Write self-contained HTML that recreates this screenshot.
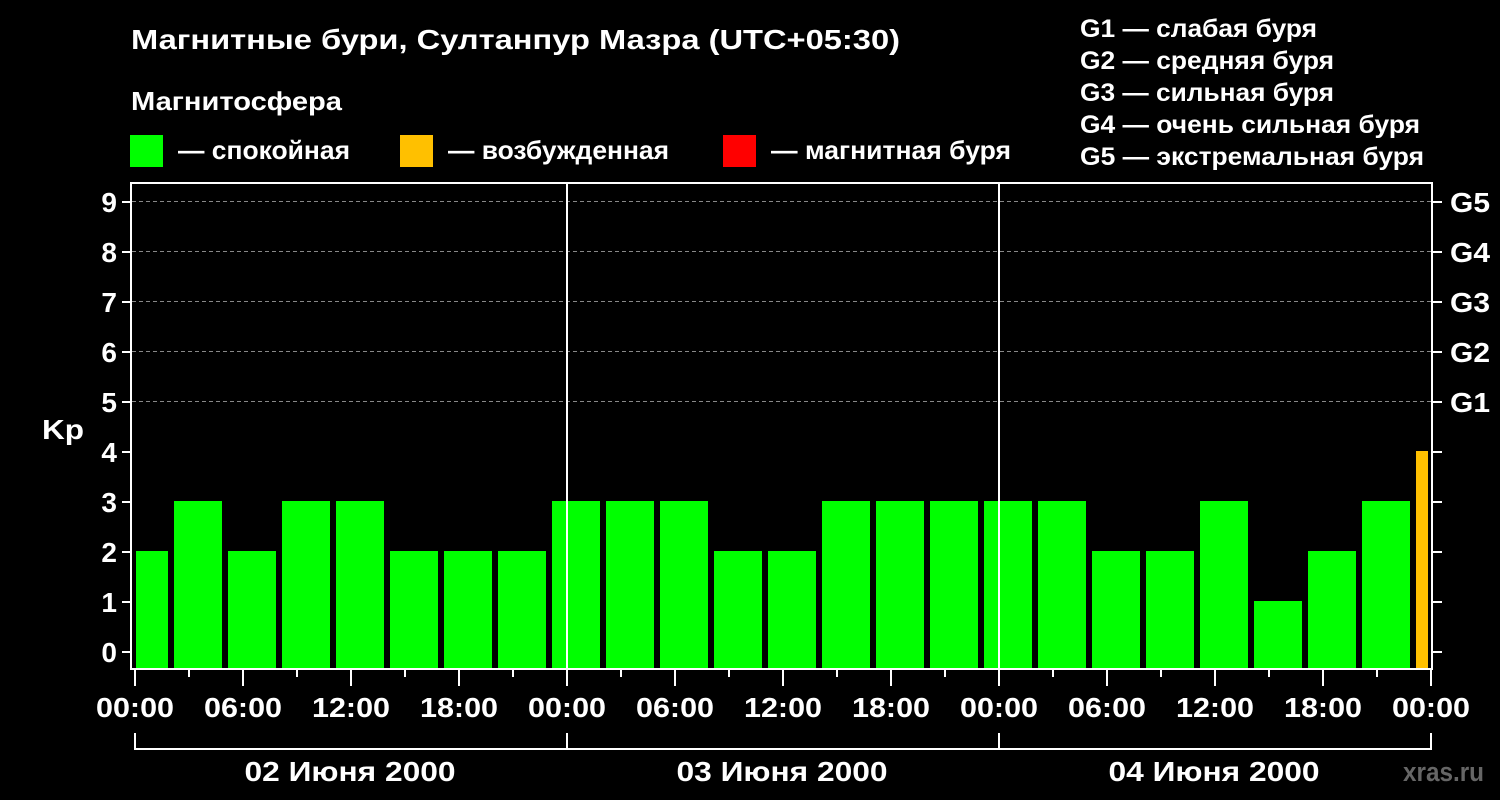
<!DOCTYPE html>
<html><head><meta charset="utf-8"><style>
html,body{margin:0;padding:0;background:#000;width:1500px;height:800px;overflow:hidden}
svg text{font-family:"Liberation Sans",sans-serif;font-weight:bold;fill:#fff}
</style></head><body>
<svg width="1500" height="800" xmlns="http://www.w3.org/2000/svg">
<text x="131" y="49" font-size="28" textLength="769" lengthAdjust="spacingAndGlyphs">Магнитные бури, Султанпур Мазра (UTC+05:30)</text>
<text x="131" y="110" font-size="26" textLength="211" lengthAdjust="spacingAndGlyphs">Магнитосфера</text>
<rect x="130" y="135" width="33" height="32" fill="#00ff00"/>
<text x="178" y="159" font-size="26" textLength="172" lengthAdjust="spacingAndGlyphs">— спокойная</text>
<rect x="400" y="135" width="33" height="32" fill="#ffc000"/>
<text x="448" y="159" font-size="26" textLength="221" lengthAdjust="spacingAndGlyphs">— возбужденная</text>
<rect x="723" y="135" width="33" height="32" fill="#ff0000"/>
<text x="771" y="159" font-size="26" textLength="240" lengthAdjust="spacingAndGlyphs">— магнитная буря</text>
<g font-size="25">
<text x="1080" y="37" textLength="237" lengthAdjust="spacingAndGlyphs">G1 — слабая буря</text>
<text x="1080" y="69" textLength="254" lengthAdjust="spacingAndGlyphs">G2 — средняя буря</text>
<text x="1080" y="101" textLength="254" lengthAdjust="spacingAndGlyphs">G3 — сильная буря</text>
<text x="1080" y="133" textLength="340" lengthAdjust="spacingAndGlyphs">G4 — очень сильная буря</text>
<text x="1080" y="165" textLength="344" lengthAdjust="spacingAndGlyphs">G5 — экстремальная буря</text>
</g>
<g stroke="#888" stroke-dasharray="4,3" stroke-width="1">
<line x1="132" y1="201.5" x2="1431" y2="201.5"/>
<line x1="132" y1="251.5" x2="1431" y2="251.5"/>
<line x1="132" y1="301.5" x2="1431" y2="301.5"/>
<line x1="132" y1="351.5" x2="1431" y2="351.5"/>
<line x1="132" y1="401.5" x2="1431" y2="401.5"/>
</g>
<g fill="#00ff00">
<rect x="136" y="551" width="32" height="117"/>
<rect x="174" y="501" width="48" height="167"/>
<rect x="228" y="551" width="48" height="117"/>
<rect x="282" y="501" width="48" height="167"/>
<rect x="336" y="501" width="48" height="167"/>
<rect x="390" y="551" width="48" height="117"/>
<rect x="444" y="551" width="48" height="117"/>
<rect x="498" y="551" width="48" height="117"/>
<rect x="552" y="501" width="48" height="167"/>
<rect x="606" y="501" width="48" height="167"/>
<rect x="660" y="501" width="48" height="167"/>
<rect x="714" y="551" width="48" height="117"/>
<rect x="768" y="551" width="48" height="117"/>
<rect x="822" y="501" width="48" height="167"/>
<rect x="876" y="501" width="48" height="167"/>
<rect x="930" y="501" width="48" height="167"/>
<rect x="984" y="501" width="48" height="167"/>
<rect x="1038" y="501" width="48" height="167"/>
<rect x="1092" y="551" width="48" height="117"/>
<rect x="1146" y="551" width="48" height="117"/>
<rect x="1200" y="501" width="48" height="167"/>
<rect x="1254" y="601" width="48" height="67"/>
<rect x="1308" y="551" width="48" height="117"/>
<rect x="1362" y="501" width="48" height="167"/>
</g>
<rect x="1416" y="451" width="12" height="217" fill="#ffc000"/>
<g stroke="#fff" stroke-width="2" fill="none">
<rect x="131" y="183" width="1301" height="486"/>
<line x1="567" y1="183" x2="567" y2="669"/>
<line x1="999" y1="183" x2="999" y2="669"/>
</g>
<g stroke="#fff" stroke-width="2">
<line x1="122" y1="652" x2="131" y2="652"/><line x1="122" y1="602" x2="131" y2="602"/>
<line x1="122" y1="552" x2="131" y2="552"/><line x1="122" y1="502" x2="131" y2="502"/>
<line x1="122" y1="452" x2="131" y2="452"/><line x1="122" y1="402" x2="131" y2="402"/>
<line x1="122" y1="352" x2="131" y2="352"/><line x1="122" y1="302" x2="131" y2="302"/>
<line x1="122" y1="252" x2="131" y2="252"/><line x1="122" y1="202" x2="131" y2="202"/>
<line x1="1432" y1="652" x2="1442" y2="652"/><line x1="1432" y1="602" x2="1442" y2="602"/>
<line x1="1432" y1="552" x2="1442" y2="552"/><line x1="1432" y1="502" x2="1442" y2="502"/>
<line x1="1432" y1="452" x2="1442" y2="452"/><line x1="1432" y1="402" x2="1442" y2="402"/>
<line x1="1432" y1="352" x2="1442" y2="352"/><line x1="1432" y1="302" x2="1442" y2="302"/>
<line x1="1432" y1="252" x2="1442" y2="252"/><line x1="1432" y1="202" x2="1442" y2="202"/>
</g>
<g stroke="#fff" stroke-width="2">
<line x1="135" y1="670" x2="135" y2="686"/><line x1="189" y1="670" x2="189" y2="677"/>
<line x1="243" y1="670" x2="243" y2="686"/><line x1="297" y1="670" x2="297" y2="677"/>
<line x1="351" y1="670" x2="351" y2="686"/><line x1="405" y1="670" x2="405" y2="677"/>
<line x1="459" y1="670" x2="459" y2="686"/><line x1="513" y1="670" x2="513" y2="677"/>
<line x1="567" y1="670" x2="567" y2="686"/><line x1="621" y1="670" x2="621" y2="677"/>
<line x1="675" y1="670" x2="675" y2="686"/><line x1="729" y1="670" x2="729" y2="677"/>
<line x1="783" y1="670" x2="783" y2="686"/><line x1="837" y1="670" x2="837" y2="677"/>
<line x1="891" y1="670" x2="891" y2="686"/><line x1="945" y1="670" x2="945" y2="677"/>
<line x1="999" y1="670" x2="999" y2="686"/><line x1="1053" y1="670" x2="1053" y2="677"/>
<line x1="1107" y1="670" x2="1107" y2="686"/><line x1="1161" y1="670" x2="1161" y2="677"/>
<line x1="1215" y1="670" x2="1215" y2="686"/><line x1="1269" y1="670" x2="1269" y2="677"/>
<line x1="1323" y1="670" x2="1323" y2="686"/><line x1="1377" y1="670" x2="1377" y2="677"/>
<line x1="1431" y1="670" x2="1431" y2="686"/>
<polyline fill="none" points="135,733 135,749 1431,749 1431,733"/>
<line x1="567" y1="733" x2="567" y2="749"/><line x1="999" y1="733" x2="999" y2="749"/>
</g>
<g font-size="28" text-anchor="end">
<text x="117" y="662">0</text><text x="117" y="612">1</text><text x="117" y="562">2</text>
<text x="117" y="512">3</text><text x="117" y="462">4</text><text x="117" y="412">5</text>
<text x="117" y="362">6</text><text x="117" y="312">7</text><text x="117" y="262">8</text>
<text x="117" y="212">9</text>
</g>
<text x="42" y="439" font-size="28" textLength="42" lengthAdjust="spacingAndGlyphs">Kp</text>
<g font-size="28">
<text x="1450" y="212" textLength="40" lengthAdjust="spacingAndGlyphs">G5</text><text x="1450" y="262" textLength="40" lengthAdjust="spacingAndGlyphs">G4</text><text x="1450" y="312" textLength="40" lengthAdjust="spacingAndGlyphs">G3</text>
<text x="1450" y="362" textLength="40" lengthAdjust="spacingAndGlyphs">G2</text><text x="1450" y="412" textLength="40" lengthAdjust="spacingAndGlyphs">G1</text>
</g>
<g font-size="28" text-anchor="middle">
<text x="135" y="717" textLength="78" lengthAdjust="spacingAndGlyphs">00:00</text><text x="243" y="717" textLength="78" lengthAdjust="spacingAndGlyphs">06:00</text><text x="351" y="717" textLength="78" lengthAdjust="spacingAndGlyphs">12:00</text>
<text x="459" y="717" textLength="78" lengthAdjust="spacingAndGlyphs">18:00</text><text x="567" y="717" textLength="78" lengthAdjust="spacingAndGlyphs">00:00</text><text x="675" y="717" textLength="78" lengthAdjust="spacingAndGlyphs">06:00</text>
<text x="783" y="717" textLength="78" lengthAdjust="spacingAndGlyphs">12:00</text><text x="891" y="717" textLength="78" lengthAdjust="spacingAndGlyphs">18:00</text><text x="999" y="717" textLength="78" lengthAdjust="spacingAndGlyphs">00:00</text>
<text x="1107" y="717" textLength="78" lengthAdjust="spacingAndGlyphs">06:00</text><text x="1215" y="717" textLength="78" lengthAdjust="spacingAndGlyphs">12:00</text><text x="1323" y="717" textLength="78" lengthAdjust="spacingAndGlyphs">18:00</text>
<text x="1431" y="717" textLength="78" lengthAdjust="spacingAndGlyphs">00:00</text>
<text x="350" y="781" textLength="211" lengthAdjust="spacingAndGlyphs">02 Июня 2000</text>
<text x="782" y="781" textLength="211" lengthAdjust="spacingAndGlyphs">03 Июня 2000</text>
<text x="1214" y="781" textLength="211" lengthAdjust="spacingAndGlyphs">04 Июня 2000</text>
</g>
<text x="1403" y="781" font-size="27" textLength="81" lengthAdjust="spacingAndGlyphs" style="fill:#666">xras.ru</text>
</svg>
</body></html>
